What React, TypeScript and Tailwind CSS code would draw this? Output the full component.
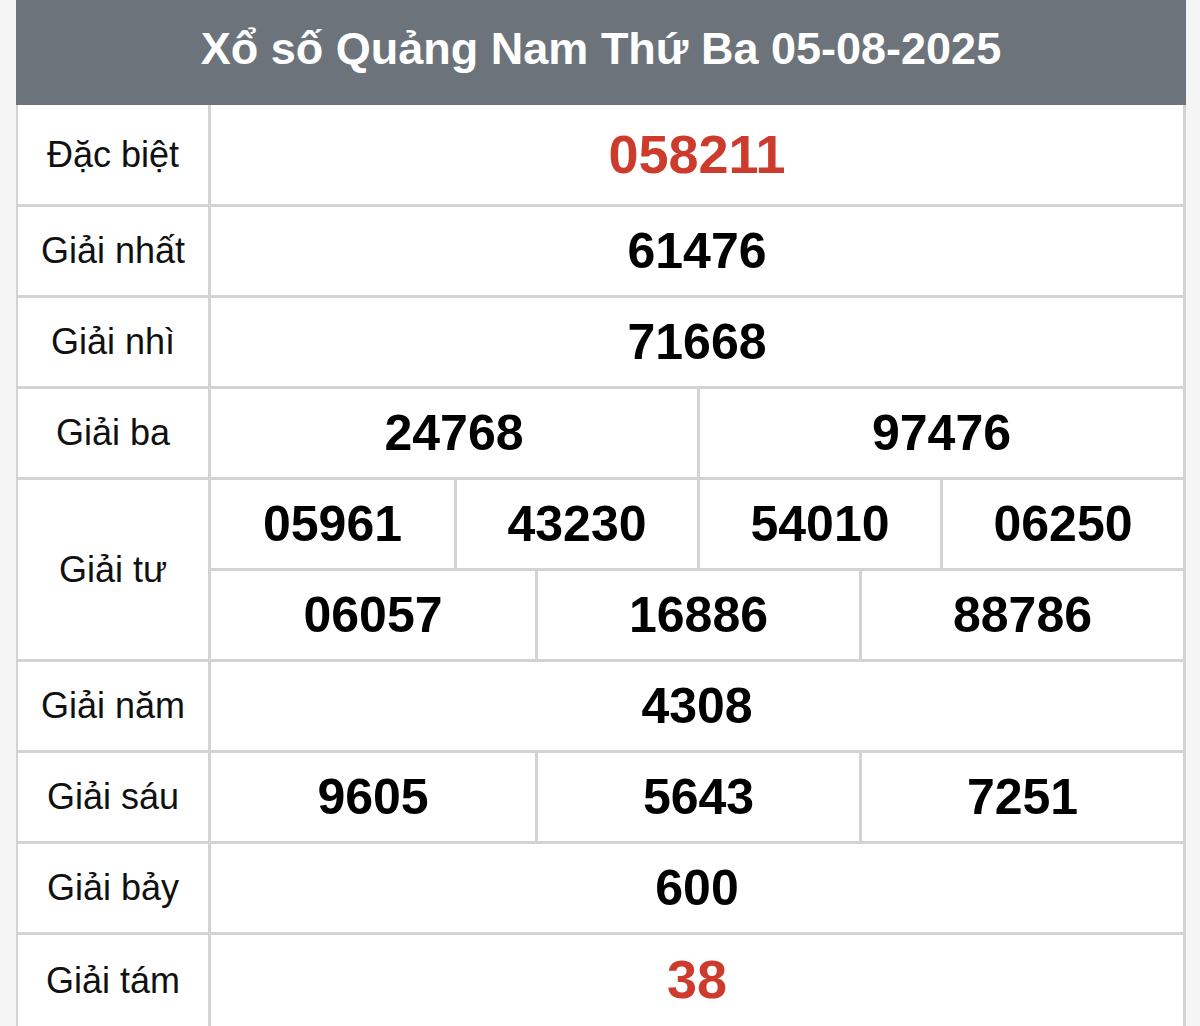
import React from "react";

type Row = {
  label: string;
  lines: string[][];
  red?: boolean;
};

const rows: Row[] = [
  { label: "Đặc biệt", lines: [["058211"]], red: true },
  { label: "Giải nhất", lines: [["61476"]] },
  { label: "Giải nhì", lines: [["71668"]] },
  { label: "Giải ba", lines: [["24768", "97476"]] },
  { label: "Giải tư", lines: [["05961", "43230", "54010", "06250"], ["06057", "16886", "88786"]] },
  { label: "Giải năm", lines: [["4308"]] },
  { label: "Giải sáu", lines: [["9605", "5643", "7251"]] },
  { label: "Giải bảy", lines: [["600"]] },
  { label: "Giải tám", lines: [["38"]], red: true },
];

const cols: Record<number, string> = {
  1: "grid-cols-1",
  2: "grid-cols-2",
  3: "grid-cols-3",
  4: "grid-cols-4",
};

function NumberLine({ nums, red, last }: { nums: string[]; red?: boolean; last: boolean }) {
  return (
    <div
      className={`grid ${cols[nums.length]} ${last ? "h-[88px]" : "h-[91px] border-b-[3px] border-[#d3d3d3]"}`}
    >
      {nums.map((n, i) => (
        <div
          key={n + i}
          className={`flex items-center justify-center font-bold ${
            red ? "text-[54px] text-[#cd3b2d]" : "text-[50px] text-black"
          } ${i > 0 ? "border-l-[3px] border-[#d3d3d3]" : ""}`}
        >
          {n}
        </div>
      ))}
    </div>
  );
}

export default function App() {
  return (
    <div className="min-h-screen bg-[#f5f5f5] font-['Liberation_Sans',Arial,sans-serif]">
      <div className="ml-[16px] w-[1170px]">
        <div className="flex h-[105px] items-center justify-center bg-[#6c737a] pb-[8px] text-[45px] font-bold text-white">
          Xổ số Quảng Nam Thứ Ba 05-08-2025
        </div>
        <div className="border-l-[2px] border-r-[3px] border-[#d3d3d3] bg-white">
          {rows.map((row, idx) => {
            const first = idx === 0;
            const lastRow = idx === rows.length - 1;
            return (
              <div
                key={row.label}
                className={`flex ${first ? "h-[102px]" : row.lines.length > 1 ? "h-[182px]" : "h-[91px]"} ${
                  lastRow ? "" : "border-b-[3px] border-[#d3d3d3]"
                }`}
              >
                <div className="flex w-[193px] shrink-0 items-center justify-center border-r-[3px] border-[#d3d3d3] text-[36px] text-[#111]">
                  {row.label}
                </div>
                <div className="flex flex-1 flex-col">
                  {row.lines.map((nums, li) => (
                    <div key={li} className={first ? "flex-1 [&>div]:h-full" : ""}>
                      <NumberLine nums={nums} red={row.red} last={li === row.lines.length - 1} />
                    </div>
                  ))}
                </div>
              </div>
            );
          })}
        </div>
      </div>
    </div>
  );
}
